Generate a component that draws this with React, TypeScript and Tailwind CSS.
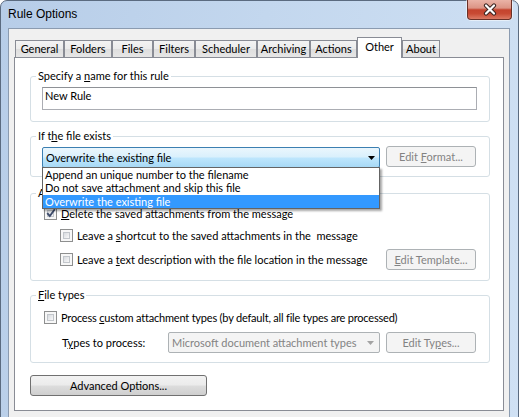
import React from 'react';

const Check = ({ checked = false }: { checked?: boolean }) => (
  <span className="relative flex h-[13px] w-[13px] shrink-0 border border-[#8e8f8f] bg-[#f7f7f7] p-[2px]">
    <span className="flex-1 border border-[#c2c6cb] bg-[linear-gradient(135deg,#d8dbdf,#f8f8f8)]" />
    {checked && (
      <svg className="absolute left-[0px] top-[-1px]" width="12" height="12" viewBox="0 0 12 12">
        <path d="M2.2 6.2 L4.8 9 L9.8 2.2" fill="none" stroke="#3d4b6b" strokeWidth="1.9" />
      </svg>
    )}
  </span>
);

const DisBtn = ({ children }: { children: React.ReactNode }) => (
  <div className="flex h-[21px] w-[90px] shrink-0 items-center justify-center whitespace-nowrap rounded-[3px] border border-[#adb2b5] bg-[#f4f4f4] leading-[14px] text-[#838383]">
    {children}
  </div>
);

const Group = ({ label, className = '', children }: { label: React.ReactNode; className?: string; children: React.ReactNode }) => (
  <fieldset className={`w-[460px] rounded-[3px] border border-[#d5dfe5] ${className}`}>
    <legend className="ml-[5px] whitespace-nowrap px-[2px] leading-[14px]">{label}</legend>
    {children}
  </fieldset>
);

const tabs = [
  { label: 'General', w: 'w-[49px]' },
  { label: 'Folders', w: 'w-[48px]' },
  { label: 'Files', w: 'w-[41px]' },
  { label: 'Filters', w: 'w-[42px]' },
  { label: 'Scheduler', w: 'w-[62px]' },
  { label: 'Archiving', w: 'w-[53px]' },
  { label: 'Actions', w: 'w-[47px]' },
  { label: 'Other', w: 'w-[45px]', sel: true },
  { label: 'About', w: 'w-[38px]' },
];

export default function App() {
  return (
    <div className="h-[417px] w-[519px] overflow-hidden whitespace-nowrap bg-white font-['Lato','Liberation_Sans',sans-serif] text-[11px] text-black">
      <div className="flex h-[440px] flex-col rounded-t-[7px] border border-[#5b6b80] bg-[linear-gradient(100deg,#b7cde8_0%,#c3d7ee_45%,#d0e1f4_100%)]">
        {/* title bar */}
        <div className="flex h-[27px] shrink-0 items-start justify-between">
          <span className="pl-[7px] pt-[6px] font-['Liberation_Sans',sans-serif] text-[12px] leading-[15px]">Rule Options</span>
          <div className="mr-[6px] -mt-[1px] flex h-[20px] w-[45px] items-center justify-center rounded-b-[4px] border border-t-0 border-[#6a3128] bg-[linear-gradient(180deg,#eab3a7_0%,#dc9485_42%,#c4432e_52%,#c84a33_72%,#dc7a64_100%)] shadow-[0_0_0_1px_rgba(255,255,255,0.5)]">
            <svg width="16" height="13" viewBox="0 0 16 13">
              <path d="M4 2.5 L12 10.5 M12 2.5 L4 10.5" stroke="#3b2420" strokeWidth="4.2" strokeLinecap="round" />
              <path d="M4 2.5 L12 10.5 M12 2.5 L4 10.5" stroke="#ffffff" strokeWidth="2.2" strokeLinecap="round" />
            </svg>
          </div>
        </div>
        {/* client */}
        <div className="ml-[7px] mr-[8px] flex-1 border border-[#8b9bb0] bg-[#f0f0f0] pl-[5px] pt-[8px]">
          {/* tab strip */}
          <div className="flex h-[20px] items-end pl-[1px]">
            {tabs.map((t) =>
              t.sel ? (
                <div
                  key={t.label}
                  className={`relative z-10 -mb-[1px] flex h-[21px] ${t.w} shrink-0 justify-center border border-b-0 border-[#898c95] bg-white pt-[2px] leading-[14px]`}
                >
                  {t.label}
                </div>
              ) : (
                <div
                  key={t.label}
                  className={`flex h-[17px] ${t.w} shrink-0 justify-center border border-b-0 border-[#898c95] bg-[linear-gradient(180deg,#f3f3f3_0%,#ebebeb_50%,#dedede_51%,#e6e6e6_100%)] pt-[1px] leading-[14px]`}
                >
                  {t.label}
                </div>
              )
            )}
          </div>
          {/* panel */}
          <div className="h-[354px] w-[490px] border border-[#898c95] bg-white pl-[15px] pt-[11px]">
            <Group
              label={
                <>
                  Specify a <u>n</u>ame for this rule
                </>
              }
            >
              <div className="pb-[11px] pl-[11px] pt-[4px]">
                <div className="h-[23px] w-[435px] border border-[#abadb3] border-t-[#8e9196] bg-white pl-[2px] pt-[1px] leading-[14px]">
                  New Rule
                </div>
              </div>
            </Group>

            <Group
              className="mt-[7px]"
              label={
                <>
                  If t<u>h</u>e file exists
                </>
              }
            >
              <div className="flex pb-[8px] pl-[11px] pt-[4px]">
                <div className="relative w-[338px]">
                  <div className="flex h-[21px] items-center justify-between rounded-[2px] border border-[#3c7fb1] bg-[linear-gradient(180deg,#eaf6fd_0%,#d9f0fc_48%,#bee6fd_52%,#a7d9f5_100%)] pl-[3px] pr-[4px] leading-[14px]">
                    <span>Overwrite the existing file</span>
                    <svg width="7" height="4" viewBox="0 0 7 4">
                      <path d="M0 0 H7 L3.5 4 Z" fill="#000" />
                    </svg>
                  </div>
                  <div className="absolute left-0 top-[20px] z-20 w-[338px] border border-[#646464] bg-white shadow-[2px_2px_2px_rgba(0,0,0,0.35)]">
                    <div className="h-[13px] pl-[2px] leading-[13px]">Append an unique number to the filename</div>
                    <div className="h-[14px] pl-[2px] leading-[14px]">Do not save attachment and skip this file</div>
                    <div className="h-[13px] bg-[#3399ff] pl-[2px] leading-[14px] text-white">Overwrite the existing file</div>
                  </div>
                </div>
                <div className="ml-[6px] -mt-[1px]">
                  <DisBtn>
                    <span>
                      Edit <u>F</u>ormat...
                    </span>
                  </DisBtn>
                </div>
              </div>
            </Group>

            <Group className="mt-[9px]" label="Attachments">
              <div className="pb-[10px] pl-[13px] pr-[13px] pt-[7px]">
                <div className="flex h-[13px] items-center gap-[4px]">
                  <Check checked />
                  <span className="leading-[14px]">
                    <u>D</u>elete the saved attachments from the message
                  </span>
                </div>
                <div className="mt-[9px] flex h-[13px] items-center gap-[4px] pl-[16px]">
                  <Check />
                  <span className="whitespace-pre leading-[14px]">
                    Leave a <u>s</u>hortcut to the saved attachments in the  message
                  </span>
                </div>
                <div className="mt-[7px] flex h-[21px] items-center pl-[16px]">
                  <Check />
                  <span className="ml-[4px] flex-1 leading-[14px]">
                    Leave a <u>t</u>ext description with the file location in the message
                  </span>
                  <DisBtn>
                    <span>
                      <u>E</u>dit Template...
                    </span>
                  </DisBtn>
                </div>
              </div>
            </Group>

            <Group
              className="mt-[7px]"
              label={
                <>
                  <u>F</u>ile types
                </>
              }
            >
              <div className="pb-[9px] pl-[13px] pt-[9px]">
                <div className="flex h-[13px] items-center gap-[4px]">
                  <Check />
                  <span className="tracking-[-0.2px] leading-[14px]">
                    Process <u>c</u>ustom attachment types (by default, all file types are processed)
                  </span>
                </div>
                <div className="mt-[8px] flex h-[21px] items-center pl-[18px]">
                  <span className="w-[106px] leading-[14px]">
                    T<u>y</u>pes to process:
                  </span>
                  <div className="flex h-[21px] w-[212px] items-center justify-between rounded-[2px] border border-[#adb2b5] bg-[#f4f4f4] pl-[3px] pr-[5px] leading-[14px] text-[#838383]">
                    <span>Microsoft document attachment types</span>
                    <svg width="7" height="4" viewBox="0 0 7 4">
                      <path d="M0 0 H7 L3.5 4 Z" fill="#a3a3a3" />
                    </svg>
                  </div>
                  <div className="ml-[6px]">
                    <DisBtn>
                      <span>
                        Edit Ty<u>p</u>es...
                      </span>
                    </DisBtn>
                  </div>
                </div>
              </div>
            </Group>

            <div className="mt-[12px] flex h-[21px] w-[177px] items-center justify-center rounded-[3px] border border-[#707070] bg-[linear-gradient(180deg,#f2f2f2_0%,#ebebeb_49%,#dddddd_51%,#cfcfcf_100%)] leading-[14px]">
              Advanced Options...
            </div>
          </div>
        </div>
      </div>
    </div>
  );
}
